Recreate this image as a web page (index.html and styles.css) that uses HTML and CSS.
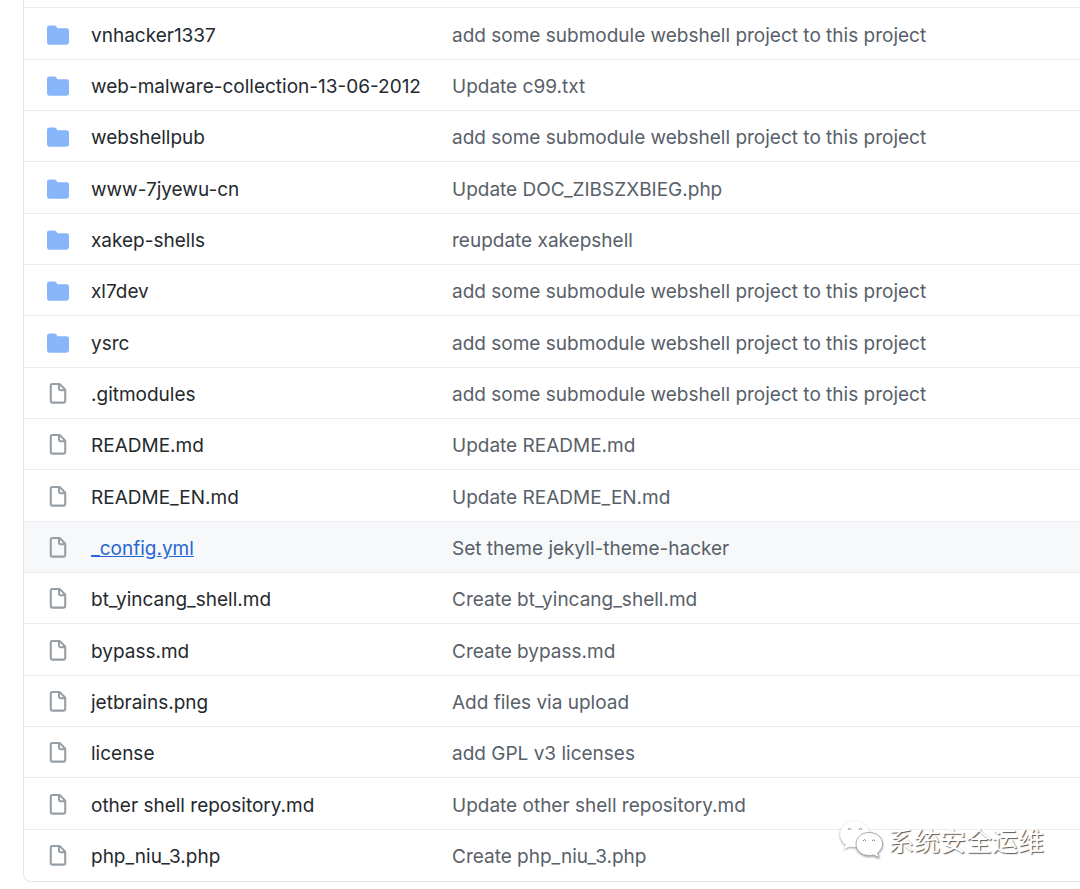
FILE: index.html
```html
<!DOCTYPE html>
<html lang="en">
<head>
<meta charset="utf-8">
<title>Files</title>
<link rel="stylesheet" href="styles.css">
</head>
<body>
<svg class="sprite" aria-hidden="true">
<symbol id="dir" viewBox="0 0 16 16"><path d="M1.75 1A1.75 1.75 0 000 2.75v10.5C0 14.216.784 15 1.75 15h12.5A1.75 1.75 0 0016 13.25v-8.5A1.75 1.75 0 0014.25 3h-6.5a.25.25 0 01-.2-.1l-.9-1.2c-.33-.44-.85-.7-1.4-.7h-3.5z"/></symbol>
<symbol id="file" viewBox="0 0 16 16"><path fill-rule="evenodd" d="M3.75 1.5a.25.25 0 00-.25.25v11.5c0 .138.112.25.25.25h8.5a.25.25 0 00.25-.25V6H9.75A1.75 1.75 0 018 4.25V1.5H3.75zm5.75.56v2.19c0 .138.112.25.25.25h2.19L9.5 2.06zM2 1.75C2 .784 2.784 0 3.75 0h5.086c.464 0 .909.184 1.237.513l3.414 3.414c.329.328.513.773.513 1.237v8.086A1.75 1.75 0 0112.25 15h-8.5A1.75 1.75 0 012 13.25V1.75z"/></symbol>
</svg>
<main class="box">
<table class="files">
<tbody>
<tr><td class="icon"><svg class="dir"><use href="#dir"/></svg></td><td class="name"><a href="#">vnhacker1337</a></td><td class="message"><a href="#">add some submodule webshell project to this project</a></td></tr>
<tr><td class="icon"><svg class="dir"><use href="#dir"/></svg></td><td class="name"><a href="#">web-malware-collection-13-06-2012</a></td><td class="message"><a href="#">Update c99.txt</a></td></tr>
<tr><td class="icon"><svg class="dir"><use href="#dir"/></svg></td><td class="name"><a href="#">webshellpub</a></td><td class="message"><a href="#">add some submodule webshell project to this project</a></td></tr>
<tr><td class="icon"><svg class="dir"><use href="#dir"/></svg></td><td class="name"><a href="#">www-7jyewu-cn</a></td><td class="message"><a href="#">Update DOC_ZIBSZXBIEG.php</a></td></tr>
<tr><td class="icon"><svg class="dir"><use href="#dir"/></svg></td><td class="name"><a href="#">xakep-shells</a></td><td class="message"><a href="#">reupdate xakepshell</a></td></tr>
<tr><td class="icon"><svg class="dir"><use href="#dir"/></svg></td><td class="name"><a href="#">xl7dev</a></td><td class="message"><a href="#">add some submodule webshell project to this project</a></td></tr>
<tr><td class="icon"><svg class="dir"><use href="#dir"/></svg></td><td class="name"><a href="#">ysrc</a></td><td class="message"><a href="#">add some submodule webshell project to this project</a></td></tr>
<tr><td class="icon"><svg class="file"><use href="#file"/></svg></td><td class="name"><a href="#">.gitmodules</a></td><td class="message"><a href="#">add some submodule webshell project to this project</a></td></tr>
<tr><td class="icon"><svg class="file"><use href="#file"/></svg></td><td class="name"><a href="#">README.md</a></td><td class="message"><a href="#">Update README.md</a></td></tr>
<tr><td class="icon"><svg class="file"><use href="#file"/></svg></td><td class="name"><a href="#">README_EN.md</a></td><td class="message"><a href="#">Update README_EN.md</a></td></tr>
<tr class="active"><td class="icon"><svg class="file"><use href="#file"/></svg></td><td class="name"><a href="#">_config.yml</a></td><td class="message"><a href="#">Set theme jekyll-theme-hacker</a></td></tr>
<tr><td class="icon"><svg class="file"><use href="#file"/></svg></td><td class="name"><a href="#">bt_yincang_shell.md</a></td><td class="message"><a href="#">Create bt_yincang_shell.md</a></td></tr>
<tr><td class="icon"><svg class="file"><use href="#file"/></svg></td><td class="name"><a href="#">bypass.md</a></td><td class="message"><a href="#">Create bypass.md</a></td></tr>
<tr><td class="icon"><svg class="file"><use href="#file"/></svg></td><td class="name"><a href="#">jetbrains.png</a></td><td class="message"><a href="#">Add files via upload</a></td></tr>
<tr><td class="icon"><svg class="file"><use href="#file"/></svg></td><td class="name"><a href="#">license</a></td><td class="message"><a href="#">add GPL v3 licenses</a></td></tr>
<tr><td class="icon"><svg class="file"><use href="#file"/></svg></td><td class="name"><a href="#">other shell repository.md</a></td><td class="message"><a href="#">Update other shell repository.md</a></td></tr>
<tr><td class="icon"><svg class="file"><use href="#file"/></svg></td><td class="name"><a href="#">php_niu_3.php</a></td><td class="message"><a href="#">Create php_niu_3.php</a></td></tr>
</tbody>
</table>
<div class="watermark" lang="zh">
<svg class="wechat" viewBox="0 0 46 40" aria-hidden="true">
<path d="M16 1C7.500 1 1 7 1 14.500c0 4.300 2.200 7.800 5.700 10.200L5 29l6-2.600c1.700.5 3.300.7 5 .7 8.500 0 15-6 15-12.600S24.500 1 16 1z"/>
<path class="front" d="M30 12.500c-7.500 0-13 5-13 11.500s5.500 11.500 13 11.500c1.600 0 3-.2 4.400-.6L40 37.500l-1.400-4.600c2.900-2.100 4.900-5.300 4.900-8.900 0-6.500-6-11.500-13.500-11.500z"/>
<g class="eyes"><path d="M9 10q1.500-3.500 3 0M20 10q1.500-3.500 3 0M24 21q1.500-3 3 0M33 21q1.500-3 3 0"/></g>
</svg>
<span>系统安全运维</span>
</div>
</main>
</body>
</html>
```
FILE: styles.css
```css
* { box-sizing: border-box; }
body {
  margin: 0;
  padding: 0 0 7px 23px;
  background: #fff;
  font: 19px/28px Inter, "Liberation Sans", sans-serif;
}
.sprite { position: absolute; width: 0; height: 0; }
.box {
  position: relative;
  padding: 7px 0 1px;
  border: solid #e1e4e8;
  border-width: 0 0 1px 1px;
  border-bottom-left-radius: 8px;
}
.files { width: 100%; border-collapse: separate; border-spacing: 0; table-layout: fixed; }
tr { height: 51px; }
tr:nth-child(3n+1) { height: 52px; }
td { padding: 4px 0 0; border-top: 1px solid #eaecef; white-space: nowrap; }
.icon { width: 67px; padding: 2px 0 0 23px; }
.icon svg { display: block; width: 22px; height: 22px; }
.dir { fill: #88b6fa; }
.file { fill: #959da5; }
.name { width: 361px; }
a { color: #24292e; text-decoration: none; }
.message a { color: #586069; }
.active { background: #f6f8fa; }
.active .name a { color: #2866d4; text-decoration: underline; }
.watermark {
  position: absolute;
  right: 36px;
  bottom: 21px;
  display: flex;
  align-items: center;
  gap: 3px;
  color: #fff;
  font: 26px/40px "Noto Sans CJK SC", sans-serif;
  text-shadow: 1px 1px 1px #555;
}
.wechat {
  width: 46px;
  height: 40px;
  fill: #fff;
  filter: drop-shadow(0 1px 1px #999);
}
.front { stroke: #aaa; stroke-width: 1; }
.eyes { fill: none; stroke: #888; stroke-width: 1; }
```
